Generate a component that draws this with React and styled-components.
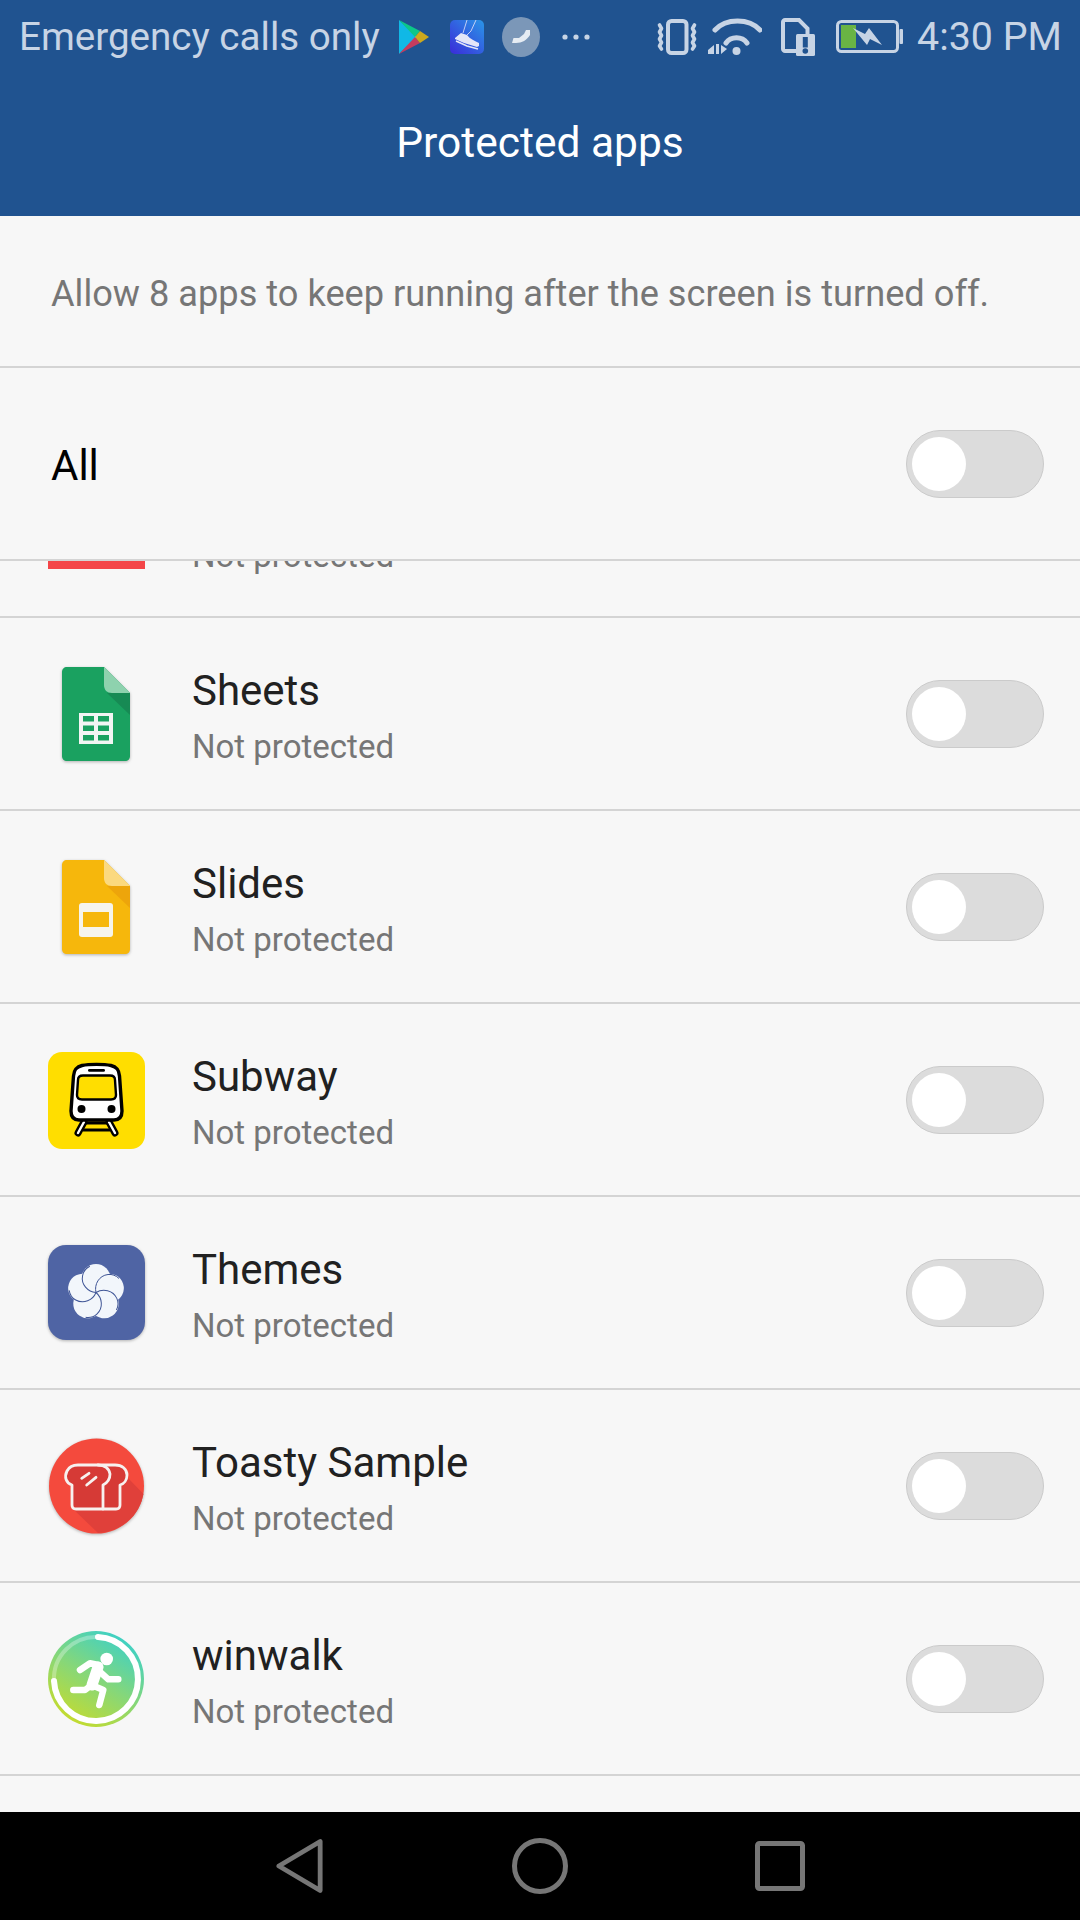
import styled, { createGlobalStyle } from "styled-components";

const GlobalStyle = createGlobalStyle`
  html, body {
    margin: 0;
    padding: 0;
    background: #f7f7f7;
  }
  * {
    box-sizing: border-box;
  }
`;

const Page = styled.div`
  width: 1080px;
  height: 1920px;
  display: flex;
  flex-direction: column;
  overflow: hidden;
  background: #f7f7f7;
  font-family: Roboto, "Liberation Sans", sans-serif;
`;

const Header = styled.header`
  height: 216px;
  flex: none;
  background: #205390;
  display: flex;
  flex-direction: column;
`;

const StatusBar = styled.div`
  height: 72px;
  display: flex;
  align-items: center;
  justify-content: space-between;
  padding: 1px 18px 0 19px;
  color: #c7d4e5;
  font-size: 38.6px;
`;

const StatusGroup = styled.div`
  display: flex;
  align-items: center;
`;

const StatusIcon = styled.svg`
  flex: none;
  margin-left: ${(p) => p.$gap || 0}px;
`;

const Clock = styled.span`
  margin-left: 14px;
  font-size: 39.4px;
`;

const Title = styled.h1`
  margin: 0;
  flex: 1;
  display: flex;
  align-items: center;
  justify-content: center;
  padding-bottom: 4px;
  color: #fff;
  font-size: 42.5px;
  font-weight: 400;
`;

const Intro = styled.div`
  height: 152px;
  flex: none;
  display: flex;
  align-items: center;
  padding: 4px 51px 0;
  border-bottom: 2px solid #d4d4d4;
  color: #767676;
  font-size: 36.2px;
`;

const AllRow = styled.div`
  height: 193px;
  flex: none;
  display: flex;
  align-items: center;
  justify-content: space-between;
  padding: 0 36px 0 51px;
  border-bottom: 2px solid #d4d4d4;
  color: #000;
  font-size: 42px;
`;

const AllLabel = styled.span`
  padding-top: 3px;
`;

const List = styled.div`
  flex: 1;
  overflow: hidden;
`;

const Spacer = styled.div`
  height: 57px;
  border-bottom: 2px solid #d4d4d4;
`;

const ClippedTop = styled.div`
  height: 13px;
  margin-bottom: -13px;
  padding-left: 192px;
  overflow: hidden;
  position: relative;
`;

const ClippedBar = styled.div`
  position: absolute;
  left: 48px;
  top: 0;
  width: 97px;
  height: 8px;
  background: #f44548;
`;

const ClippedText = styled.div`
  margin-top: -25px;
  color: #767676;
  font-size: 33px;
  line-height: 40px;
`;

const Row = styled.div`
  height: 193px;
  display: flex;
  align-items: center;
  padding: 0 36px 0 48px;
  border-bottom: 2px solid #d4d4d4;
`;

const IconSlot = styled.div`
  width: 97px;
  height: 97px;
  flex: none;
  margin: 2px 47px 0 0;
`;

const AppIcon = styled.svg`
  display: block;
  overflow: visible;
  filter: ${(p) => (p.$flat ? "none" : "drop-shadow(0 1.5px 1.5px rgba(0, 0, 0, 0.28))")};
`;

const RowText = styled.div`
  flex: 1;
  display: flex;
  flex-direction: column;
  gap: 11px;
  margin-top: 5px;
`;

const AppName = styled.div`
  color: #212121;
  font-size: 42px;
  line-height: 50px;
`;

const AppStatus = styled.div`
  color: #767676;
  font-size: 33px;
  line-height: 40px;
`;

const Toggle = styled.div`
  width: 138px;
  height: 68px;
  flex: none;
  padding: 6px 6px 6px 5px;
  border-radius: 34px;
  border: 1px solid #cbcbcb;
  background: #dcdcdc;
`;

const Knob = styled.div`
  width: 54px;
  height: 54px;
  border-radius: 50%;
  background: #fff;
`;

const NavBar = styled.nav`
  height: 108px;
  flex: none;
  background: #000;
  display: flex;
  align-items: center;
  padding-left: 276px;
`;

const NavButton = styled.div`
  width: ${(p) => p.$width}px;
  margin-right: ${(p) => p.$gap || 0}px;
  display: flex;
`;

const PlayIcon = () => (
  <StatusIcon $gap={19} width="30" height="34" viewBox="0 0 30 34">
    <path d="M0 0 L18 17 L0 34 Z" fill="#10b8e6" />
    <path d="M0 0 L21 11 L16 17 Z" fill="#0cc789" />
    <path d="M0 34 L16 17 L21 23 Z" fill="#c43c5e" />
    <path d="M21 11 L30 17 L21 23 L16 17 Z" fill="#cda81e" />
  </StatusIcon>
);

const ShoeIcon = () => (
  <StatusIcon $gap={21} width="34" height="34" viewBox="0 0 34 34">
    <defs>
      <linearGradient id="shoe" x1="0" y1="1" x2="1" y2="0">
        <stop offset="0" stopColor="#3a2bd8" />
        <stop offset="1" stopColor="#2a96e8" />
      </linearGradient>
    </defs>
    <rect width="34" height="34" rx="5" fill="url(#shoe)" />
    <path
      d="M17 0 L13 13 M26 0 L21 11 L17 15"
      stroke="#d5d8f5"
      strokeWidth="0.9"
      fill="none"
    />
    <path d="M5 18 L11 13 L17 15 C20 19 25 21 29 23 L29 26 L27 27 L14 23 L5 19 Z" fill="#e4e6f8" />
    <path d="M6 21 L17 26 L28 29" stroke="#e4e6f8" strokeWidth="1.5" fill="none" />
  </StatusIcon>
);

const BadgeIcon = () => (
  <StatusIcon $gap={18} width="38" height="40" viewBox="0 0 38 40">
    <ellipse cx="19" cy="20" rx="19" ry="20" fill="#7b97b8" />
    <path d="M10 26 L11.5 21 L17 21 L22 17 L24 13 L28 13 L28 18 C25 23 20 26 14 26 Z" fill="#e6ecf3" />
  </StatusIcon>
);

const MoreDots = () => (
  <StatusIcon $gap={21} width="30" height="8" viewBox="0 0 30 8">
    <circle cx="4" cy="4" r="2.6" fill="#c7d4e5" />
    <circle cx="15" cy="4" r="2.6" fill="#c7d4e5" />
    <circle cx="26" cy="4" r="2.6" fill="#c7d4e5" />
  </StatusIcon>
);

const VibrateIcon = () => (
  <StatusIcon width="40" height="36" viewBox="0 0 40 36">
    <rect x="11" y="2" width="18.5" height="32" rx="3.5" fill="none" stroke="#c7d4e5" strokeWidth="4" />
    <g fill="none" stroke="#c7d4e5" strokeWidth="3.6" strokeLinecap="round" strokeLinejoin="round">
      <path d="M2.5 6 L4.5 9.5 L2.5 13 L4.5 16.5 L2.5 20 L4.5 23.5 L2.5 27 L4.5 30" />
      <path d="M37.5 6 L35.5 9.5 L37.5 13 L35.5 16.5 L37.5 20 L35.5 23.5 L37.5 27 L35.5 30" />
    </g>
  </StatusIcon>
);

const WifiIcon = () => (
  <StatusIcon $gap={11} width="54" height="37" viewBox="0 0 54 37">
    <g fill="none" stroke="#c7d4e5" strokeWidth="5" strokeLinecap="round">
      <path d="M7 12 C18 0 41 0 52 12" />
      <path d="M18 25 C23 18 34 18 39 25" />
    </g>
    <circle cx="28.5" cy="33" r="4" fill="#c7d4e5" />
    <path d="M0 32 L6 27 L6 36 L0 36 Z M8 26 L11 26 L11 36 L8 36 Z M13 27 L13 36 L19 31 Z" fill="#c7d4e5" />
  </StatusIcon>
);

const SimIcon = () => (
  <StatusIcon $gap={19} width="34" height="38" viewBox="0 0 34 38">
    <path
      d="M2 4 C2 3 3 2 4 2 L18 2 L26.5 10.5 L26.5 33 L4 33 C3 33 2 32 2 31 Z"
      fill="none"
      stroke="#c7d4e5"
      strokeWidth="4"
    />
    <rect x="15" y="16" width="19" height="22" rx="1.5" fill="#c7d4e5" />
    <rect x="21.8" y="19" width="5" height="10.5" fill="#205390" />
    <circle cx="24.3" cy="33" r="2.8" fill="#205390" />
  </StatusIcon>
);

const BatteryIcon = () => (
  <StatusIcon $gap={21} width="67" height="33" viewBox="0 0 67 33">
    <rect x="1.5" y="1.5" width="60" height="30" rx="4" fill="none" stroke="#c7d4e5" strokeWidth="3" />
    <rect x="63.5" y="9" width="3.5" height="15" rx="1" fill="#c7d4e5" />
    <rect x="5" y="5" width="15" height="23" fill="#69b444" />
    <path d="M17 8 L29 14 L33 8 L46 25 L34 19 L31 25 Z" fill="#c7d4e5" />
  </StatusIcon>
);

const SheetsIcon = () => (
  <AppIcon width="97" height="97" viewBox="0 0 97 97">
    <path
      d="M19 1 C16 1 14 3 14 6 L14 90 C14 93 16 95 19 95 L77 95 C80 95 82 93 82 90 L82 27 L56 1 Z"
      fill="#1aa160"
    />
    <path d="M59 27 L82 49 L82 27 Z" fill="#178a54" />
    <path d="M56 1 L82 27 L64 27 C59 27 56 24 56 19 Z" fill="#8ed2ae" />
    <rect x="31" y="47" width="34" height="31" fill="#f2f5f3" />
    <g fill="#1aa160">
      <rect x="35" y="50" width="11" height="5.5" />
      <rect x="50" y="50" width="11" height="5.5" />
      <rect x="35" y="59.5" width="11" height="5.5" />
      <rect x="50" y="59.5" width="11" height="5.5" />
      <rect x="35" y="69" width="11" height="5.5" />
      <rect x="50" y="69" width="11" height="5.5" />
    </g>
  </AppIcon>
);

const SlidesIcon = () => (
  <AppIcon width="97" height="97" viewBox="0 0 97 97">
    <path
      d="M19 1 C16 1 14 3 14 6 L14 90 C14 93 16 95 19 95 L77 95 C80 95 82 93 82 90 L82 27 L56 1 Z"
      fill="#f6b70c"
    />
    <path d="M59 27 L82 49 L82 27 Z" fill="#eda50b" />
    <path d="M56 1 L82 27 L64 27 C59 27 56 24 56 19 Z" fill="#fbd97f" />
    <rect x="31" y="44" width="34" height="34" rx="3" fill="#f6f4ec" />
    <rect x="35" y="53" width="26" height="15" fill="#f6b70c" />
  </AppIcon>
);

const SubwayIcon = () => (
  <AppIcon $flat width="97" height="97" viewBox="0 0 97 97">
    <rect width="97" height="97" rx="14" fill="#ffde00" />
    <path d="M36 70 L30 81 M61 70 L67 81" stroke="#000" strokeWidth="7" strokeLinecap="round" fill="none" />
    <path d="M36 70 L30 81 M61 70 L67 81" stroke="#fff" strokeWidth="2.4" strokeLinecap="round" fill="none" />
    <path d="M38 71 L59 71 M35 78 L62 78" stroke="#000" strokeWidth="2.8" fill="none" />
    <path
      d="M34 13.5 C41 12 56 12 63 13.5 C69 15 71 18 71.5 24 L74 59 C74 65 71 68 66 68 L31 68 C26 68 23 65 23 59 L25.5 24 C26 18 28 15 34 13.5 Z"
      fill="#fff"
      stroke="#000"
      strokeWidth="3.4"
    />
    <path
      d="M35 23.5 L62 23.5 C65 23.5 67 25 67 28 L68 43 C68 46 66 47.5 63 47.5 L34 47.5 C31 47.5 29 46 29 43 L30 28 C30 25 32 23.5 35 23.5 Z"
      fill="#ffde00"
      stroke="#000"
      strokeWidth="2.4"
    />
    <rect x="40" y="17" width="17" height="2.8" rx="1.4" fill="#000" />
    <circle cx="33.5" cy="57" r="4" fill="#000" />
    <circle cx="63.5" cy="57" r="4" fill="#000" />
  </AppIcon>
);

const ThemesIcon = () => {
  const petals = [0, 72, 144, 216, 288];
  return (
    <AppIcon width="97" height="97" viewBox="0 0 97 97">
      <rect width="97" height="95" rx="18" fill="#4f64a4" />
      <g transform="translate(48 47.5)">
        {petals.map((angle) => (
          <circle
            key={angle}
            cx="0"
            cy="-14"
            r="14.5"
            fill="#f2f6fb"
            transform={`rotate(${angle})`}
          />
        ))}
        {petals.map((angle) => (
          <path
            key={angle}
            d="M0 0 C-2 -8 3 -17 12 -18 C16 -18.5 20 -17 23 -14"
            fill="none"
            stroke="#3f5596"
            strokeWidth="1"
            transform={`rotate(${angle})`}
          />
        ))}
      </g>
    </AppIcon>
  );
};

const ToastyIcon = () => (
  <AppIcon width="97" height="97" viewBox="0 0 97 97">
    <circle cx="48.5" cy="48" r="47.5" fill="#f44a3d" />
    <path d="M24 70 L50 95 A47.5 47.5 0 0 0 95.5 56 L79 39 Z" fill="#e0403a" />
    <path
      d="M24 47 C18 45 16 39 19 33 C21 29 25 27 30 27 L67 27 C74 27 79 31 79 37 C79 42 76 46 72 47 L72 67 C72 69.5 70.5 71 68 71 L28 71 C25.5 71 24 69.5 24 67 Z"
      fill="#d63a36"
    />
    <g fill="none" stroke="#f7f1ef" strokeWidth="2.8" strokeLinecap="round" strokeLinejoin="round">
      <path d="M24 47 C18 45 16 39 19 33 C21 29 25 27 30 27 L50 27 C56 27 61 30 62 36 C62 41 59 45 55 47 L55 71 L28 71 C25.5 71 24 69.5 24 67 Z" />
      <path d="M50 27 L67 27 C74 27 79 31 79 37 C79 42 76 46 72 47 L72 67 C72 69.5 70.5 71 68 71 L55 71" />
      <path d="M33.7 40.3 L41 35.3 M38.7 47 L48 39.3" />
    </g>
  </AppIcon>
);

const WinwalkIcon = () => (
  <AppIcon $flat width="97" height="97" viewBox="0 0 97 97">
    <defs>
      <linearGradient id="walkFill" x1="0.2" y1="1" x2="0.8" y2="0">
        <stop offset="0" stopColor="#cddc25" />
        <stop offset="0.5" stopColor="#85d77a" />
        <stop offset="1" stopColor="#35d0cf" />
      </linearGradient>
    </defs>
    <circle cx="48" cy="48" r="48" fill="url(#walkFill)" />
    <g fill="none" stroke="#fff" strokeLinecap="round" strokeLinejoin="round">
      <path d="M50 6 A42 42 0 1 1 6 50" strokeWidth="6" />
      <path d="M6 50 A42 42 0 0 1 50 6" strokeWidth="4" opacity="0.3" />
      <path d="M32 39 L42 32.3 L50.3 34" strokeWidth="6.5" />
      <path d="M50 36 L44 54" strokeWidth="11" />
      <path d="M53.7 42.3 L60.3 48.3 L70.3 48.3" strokeWidth="6.5" />
      <path d="M43.7 54 L37 59 L25.3 59" strokeWidth="6.5" />
      <path d="M43.7 54 L55.3 59 L51.3 74" strokeWidth="6.5" />
    </g>
    <circle cx="58.7" cy="28" r="6.3" fill="#fff" />
  </AppIcon>
);

const BackIcon = () => (
  <svg width="50" height="56" viewBox="0 0 50 56">
    <path
      d="M3 28 L46 2.5 L46 53.5 Z"
      fill="none"
      stroke="#767676"
      strokeWidth="5"
      strokeLinejoin="round"
    />
  </svg>
);

const HomeIcon = () => (
  <svg width="56" height="56" viewBox="0 0 56 56">
    <circle cx="28" cy="28" r="25.5" fill="none" stroke="#767676" strokeWidth="5" />
  </svg>
);

const RecentIcon = () => (
  <svg width="50" height="50" viewBox="0 0 50 50">
    <rect x="2.5" y="2.5" width="45" height="45" rx="2" fill="none" stroke="#767676" strokeWidth="5" />
  </svg>
);

const apps = [
  { name: "Sheets", icon: <SheetsIcon /> },
  { name: "Slides", icon: <SlidesIcon /> },
  { name: "Subway", icon: <SubwayIcon /> },
  { name: "Themes", icon: <ThemesIcon /> },
  { name: "Toasty Sample", icon: <ToastyIcon /> },
  { name: "winwalk", icon: <WinwalkIcon /> },
];

const Switch = () => (
  <Toggle>
    <Knob />
  </Toggle>
);

const App = () => {
  return (
    <Page>
      <GlobalStyle />
      <Header>
        <StatusBar>
          <StatusGroup>
            Emergency calls only
            <PlayIcon />
            <ShoeIcon />
            <BadgeIcon />
            <MoreDots />
          </StatusGroup>
          <StatusGroup>
            <VibrateIcon />
            <WifiIcon />
            <SimIcon />
            <BatteryIcon />
            <Clock>4:30 PM</Clock>
          </StatusGroup>
        </StatusBar>
        <Title>Protected apps</Title>
      </Header>
      <Intro>Allow 8 apps to keep running after the screen is turned off.</Intro>
      <AllRow>
        <AllLabel>All</AllLabel>
        <Switch />
      </AllRow>
      <List>
        <ClippedTop>
          <ClippedBar />
          <ClippedText>Not protected</ClippedText>
        </ClippedTop>
        <Spacer />
        {apps.map((app) => (
          <Row key={app.name}>
            <IconSlot>{app.icon}</IconSlot>
            <RowText>
              <AppName>{app.name}</AppName>
              <AppStatus>Not protected</AppStatus>
            </RowText>
            <Switch />
          </Row>
        ))}
      </List>
      <NavBar>
        <NavButton $width={48} $gap={188}>
          <BackIcon />
        </NavButton>
        <NavButton $width={56} $gap={187}>
          <HomeIcon />
        </NavButton>
        <NavButton $width={50}>
          <RecentIcon />
        </NavButton>
      </NavBar>
    </Page>
  );
};

export default App;
